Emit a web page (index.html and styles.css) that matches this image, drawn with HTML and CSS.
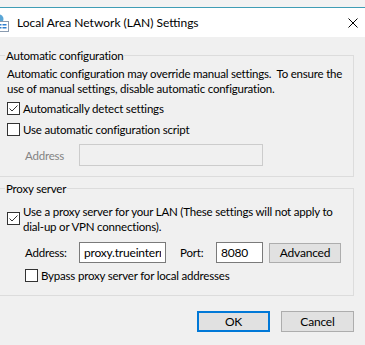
FILE: index.html
```html
<!DOCTYPE html>
<html lang="en">
<head>
  <meta charset="UTF-8" />
  <title>Local Area Network (LAN) Settings</title>
  <link rel="stylesheet" href="styles.css">
</head>
<body>
  <div class="window">
    <div class="titlebar">
      <svg class="app-icon" width="16" height="18" viewBox="0 0 16 18">
        <circle cx="6" cy="5" r="4.5" fill="#5aa6d6" />
        <path d="M3 3.5 Q5 2 7 3.5 Q6 6 3.5 6 Z" fill="#7cc26a" />
        <rect x="4.5" y="7.5" width="11" height="10" fill="#fff" stroke="#8a9bb0" />
        <rect x="6.5" y="10" width="2" height="1.5" fill="#2f7fd0" />
        <rect x="9.5" y="10" width="4" height="1.5" fill="#2f7fd0" />
        <rect x="6.5" y="13" width="2" height="1.5" fill="#2f7fd0" />
        <rect x="9.5" y="13" width="4" height="1.5" fill="#2f7fd0" />
      </svg>
      <span class="title">Local Area Network (LAN) Settings</span>
      <div class="close-btn">
        <svg width="10" height="10" viewBox="0 0 10 10">
          <path d="M0.5 0.5 L9.5 9.5 M9.5 0.5 L0.5 9.5" stroke="#000" stroke-width="1" />
        </svg>
      </div>
    </div>

    <div class="client">
      <fieldset class="group group-auto">
        <legend>Automatic configuration</legend>
        <p class="note">Automatic configuration may override manual settings.&nbsp; To ensure the<br>use of manual settings, disable automatic configuration.</p>
        <div class="check-row detect-row">
          <span class="box checked">
            <svg width="11" height="11" viewBox="0 0 11 11"><path d="M1.5 5.5 L4 8 L9.5 2.5" fill="none" stroke="#333" stroke-width="1" /></svg>
          </span>
          <span>Automatically detect settings</span>
        </div>
        <div class="check-row">
          <span class="box"></span>
          <span>Use automatic configuration script</span>
        </div>
        <div class="field-row indent">
          <span class="field-label disabled">Address</span>
          <input class="textbox textbox-disabled" type="text" disabled>
        </div>
      </fieldset>

      <fieldset class="group group-proxy">
        <legend>Proxy server</legend>
        <div class="check-row check-multi">
          <span class="box checked">
            <svg width="11" height="11" viewBox="0 0 11 11"><path d="M1.5 5.5 L4 8 L9.5 2.5" fill="none" stroke="#333" stroke-width="1" /></svg>
          </span>
          <span>Use a proxy server for your LAN (These settings will not apply to<br>dial-up or VPN connections).</span>
        </div>
        <div class="field-row indent proxy-row">
          <span class="field-label">Address:</span>
          <input class="textbox textbox-address" type="text" value="proxy.trueinternet.co.th">
          <span class="port-label">Port:</span>
          <input class="textbox textbox-port" type="text" value="8080">
          <button class="btn btn-advanced">Advanced</button>
        </div>
        <div class="check-row indent bypass-row">
          <span class="box"></span>
          <span>Bypass proxy server for local addresses</span>
        </div>
      </fieldset>

      <div class="actions">
        <button class="btn btn-default">OK</button>
        <button class="btn">Cancel</button>
      </div>
    </div>
  </div>
</body>
</html>
```

FILE: styles.css
```css
* {
  margin: 0;
  padding: 0;
  box-sizing: border-box;
}
body {
  font-family: 'Lato', sans-serif;
  font-size: 11.5px;
  letter-spacing: -0.2px;
  color: #000;
  background: #f2f2f2;
  padding-top: 7px;
  height: 345px;
  overflow: hidden;
}
.window {
  margin-left: -15px;
  width: 391px;
  height: 338px;
  border-top: 1px solid #3f9db5;
  background: #f0f0f0;
}
.titlebar {
  height: 29px;
  background: #fff;
  display: flex;
  align-items: center;
  padding-left: 8px;
}
.app-icon {
  flex: none;
}
.title {
  font-size: 12px;
  letter-spacing: 0;
  margin-left: 8px;
  flex: 1;
  white-space: nowrap;
}
.close-btn {
  width: 46px;
  height: 29px;
  display: flex;
  align-items: center;
  justify-content: center;
}
.client {
  padding: 11px 0 0 14px;
}
.group {
  width: 356px;
  margin-left: -1px;
  border: 1px solid #dcdcdc;
  padding: 0 8px 10px 8px;
}
.group legend {
  margin-left: -2px;
  padding: 0 1px;
  line-height: 15px;
}
.note {
  margin-top: 3px;
  line-height: 15px;
  white-space: nowrap;
}
.check-row {
  display: flex;
  align-items: center;
  gap: 3px;
  height: 21px;
  white-space: nowrap;
}
.detect-row {
  margin-top: 2px;
}
.box {
  width: 13px;
  height: 13px;
  flex: none;
  border: 1px solid #333;
  background: #fff;
  display: flex;
  align-items: center;
  justify-content: center;
}
.indent {
  margin-left: 18px;
}
.field-row {
  display: flex;
  align-items: center;
  margin-top: 4px;
}
.field-label {
  width: 54px;
}
.disabled {
  color: #838383;
}
.textbox {
  font-family: inherit;
  font-size: 12px;
  letter-spacing: inherit;
  color: #000;
  height: 22px;
  border: 1px solid #7a7a7a;
  background: #fff;
  padding: 0 4px;
  outline: none;
}
.textbox-disabled {
  width: 184px;
  border-color: #cccccc;
  background: #f0f0f0;
}
.group-proxy {
  margin-top: 4px;
}
.check-multi {
  height: auto;
  margin-top: 8px;
  line-height: 15px;
}
.check-multi .box {
  margin-bottom: 2px;
}
.proxy-row {
  margin-top: 8px;
}
.textbox-address {
  width: 87px;
  height: 21px;
}
.port-label {
  margin-left: 14px;
  width: 36px;
}
.textbox-port {
  width: 47px;
  height: 21px;
}
.btn {
  font-family: inherit;
  font-size: 12px;
  letter-spacing: inherit;
  color: #000;
  background: #e1e1e1;
  border: 1px solid #adadad;
  width: 73px;
  height: 21px;
}
.btn-advanced {
  margin-left: 6px;
  width: 72px;
  height: 20px;
}
.bypass-row {
  margin-top: 3px;
  height: 19px;
}
.actions {
  width: 355px;
  display: flex;
  justify-content: flex-end;
  gap: 11px;
  margin-top: 15px;
}
.btn-default {
  border: 2px solid #0078d7;
}
```
